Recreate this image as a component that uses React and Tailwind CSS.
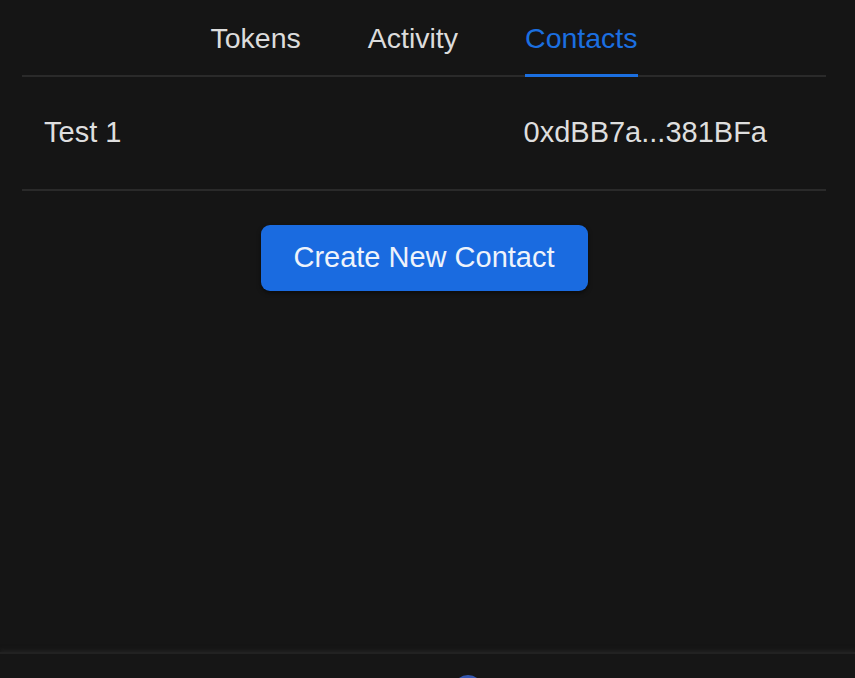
import React, { useState } from 'react';

const tabs = ['Tokens', 'Activity', 'Contacts'];

const contacts = [{ id: 1, name: 'Test 1', address: '0xdBB7a...381BFa' }];

const App = () => {
  const [active, setActive] = useState('Contacts');

  return (
    <div
      className="h-[678px] flex flex-col bg-[#151515] overflow-hidden"
      style={{ fontFamily: '"Liberation Sans", Arial, sans-serif' }}
    >
      <div className="flex-1 pl-[22px] pr-[29px]">
        {/* Tabs */}
        <div className="flex justify-center gap-[67px] border-b-2 border-[#2a2a2a]">
          {tabs.map(tab => (
            <button
              key={tab}
              onClick={() => setActive(tab)}
              className={`h-[77px] pt-[1px] -mb-[2px] text-[28.5px] leading-[32px] border-b-[3px] ${
                active === tab
                  ? 'text-[#1b6fe0] border-[#1b6fe0]'
                  : 'text-[#dcdcdc] border-transparent'
              }`}
            >
              {tab}
            </button>
          ))}
        </div>

        {/* Contacts */}
        {contacts.map(c => (
          <div
            key={c.id}
            className="h-[114px] flex items-center justify-between pl-[22px] pr-[59px] border-b-2 border-[#2a2a2a] text-[29px] text-[#dedede]"
          >
            <span>{c.name}</span>
            <span>{c.address}</span>
          </div>
        ))}

        <div className="flex justify-center pt-[34px]">
          <button className="h-[66px] w-[327px] rounded-[9px] bg-[#1a6be0] text-[29px] text-[#eef3fb] shadow-[0_2px_4px_rgba(0,0,0,0.5)]">
            Create New Contact
          </button>
        </div>
      </div>

      {/* Footer */}
      <div className="h-[26px] relative border-t-2 border-[#222222] shadow-[0_-2px_4px_rgba(40,40,40,0.6)] bg-[#161616]">
        <div className="absolute left-[453px] top-[21px] w-[30px] h-[30px] rounded-full bg-[#3557b0]" />
      </div>
    </div>
  );
};

export default App;
